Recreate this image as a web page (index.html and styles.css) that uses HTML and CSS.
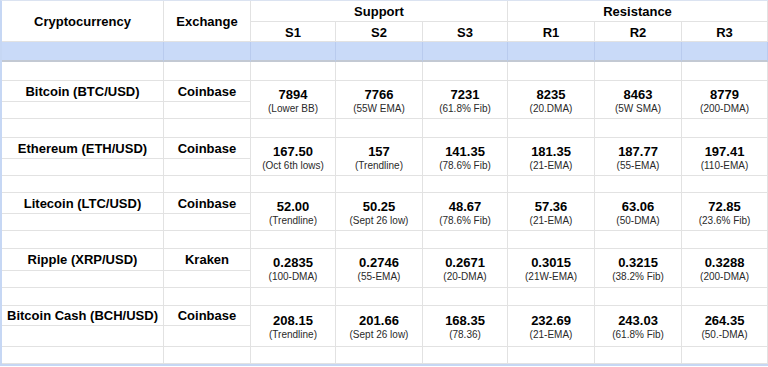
FILE: index.html
```html
<!DOCTYPE html>
<html>
<head>
<meta charset="utf-8">
<link rel="stylesheet" href="styles.css">
</head>
<body>
<div class="frame">
<table class="sheet">
<colgroup>
<col class="w-name"><col class="w-ex"><col class="w-a"><col class="w-b"><col class="w-a"><col class="w-b"><col class="w-b"><col class="w-c">
</colgroup>
<thead>
<tr class="h21"><th rowspan="2">Cryptocurrency</th><th rowspan="2">Exchange</th><th colspan="3">Support</th><th colspan="3">Resistance</th></tr>
<tr class="h20"><th>S1</th><th>S2</th><th>S3</th><th>R1</th><th>R2</th><th>R3</th></tr>
<tr class="band"><td></td><td></td><td></td><td></td><td></td><td></td><td></td><td></td></tr>
</thead>
<tbody>
<tr class="h19"><td></td><td></td><td></td><td></td><td></td><td></td><td></td><td></td></tr>
<tr class="h21"><td class="coin">Bitcoin (BTC/USD)</td><td class="coin">Coinbase</td>
<td class="lvl" rowspan="2"><b>7894</b><span>(Lower BB)</span></td>
<td class="lvl" rowspan="2"><b>7766</b><span>(55W EMA)</span></td>
<td class="lvl" rowspan="2"><b>7231</b><span>(61.8% Fib)</span></td>
<td class="lvl" rowspan="2"><b>8235</b><span>(20.DMA)</span></td>
<td class="lvl" rowspan="2"><b>8463</b><span>(5W SMA)</span></td>
<td class="lvl" rowspan="2"><b>8779</b><span>(200-DMA)</span></td></tr>
<tr class="h17"><td></td><td></td></tr>

<tr class="h19"><td></td><td></td><td></td><td></td><td></td><td></td><td></td><td></td></tr>
<tr class="h21"><td class="coin">Ethereum (ETH/USD)</td><td class="coin">Coinbase</td>
<td class="lvl" rowspan="2"><b>167.50</b><span>(Oct 6th lows)</span></td>
<td class="lvl" rowspan="2"><b>157</b><span>(Trendline)</span></td>
<td class="lvl" rowspan="2"><b>141.35</b><span>(78.6% Fib)</span></td>
<td class="lvl" rowspan="2"><b>181.35</b><span>(21-EMA)</span></td>
<td class="lvl" rowspan="2"><b>187.77</b><span>(55-EMA)</span></td>
<td class="lvl" rowspan="2"><b>197.41</b><span>(110-EMA)</span></td></tr>
<tr class="h17"><td></td><td></td></tr>

<tr class="h17"><td></td><td></td><td></td><td></td><td></td><td></td><td></td><td></td></tr>
<tr class="h21"><td class="coin">Litecoin (LTC/USD)</td><td class="coin">Coinbase</td>
<td class="lvl" rowspan="2"><b>52.00</b><span>(Trendline)</span></td>
<td class="lvl" rowspan="2"><b>50.25</b><span>(Sept 26 low)</span></td>
<td class="lvl" rowspan="2"><b>48.67</b><span>(78.6% Fib)</span></td>
<td class="lvl" rowspan="2"><b>57.36</b><span>(21-EMA)</span></td>
<td class="lvl" rowspan="2"><b>63.06</b><span>(50-DMA)</span></td>
<td class="lvl" rowspan="2"><b>72.85</b><span>(23.6% Fib)</span></td></tr>
<tr class="h17"><td></td><td></td></tr>

<tr class="h18"><td></td><td></td><td></td><td></td><td></td><td></td><td></td><td></td></tr>
<tr class="h22"><td class="coin">Ripple (XRP/USD)</td><td class="coin">Kraken</td>
<td class="lvl" rowspan="2"><b>0.2835</b><span>(100-DMA)</span></td>
<td class="lvl" rowspan="2"><b>0.2746</b><span>(55-EMA)</span></td>
<td class="lvl" rowspan="2"><b>0.2671</b><span>(20-DMA)</span></td>
<td class="lvl" rowspan="2"><b>0.3015</b><span>(21W-EMA)</span></td>
<td class="lvl" rowspan="2"><b>0.3215</b><span>(38.2% Fib)</span></td>
<td class="lvl" rowspan="2"><b>0.3288</b><span>(200-DMA)</span></td></tr>
<tr class="h17"><td></td><td></td></tr>

<tr class="h18"><td></td><td></td><td></td><td></td><td></td><td></td><td></td><td></td></tr>
<tr class="h20"><td class="coin">Bitcoin Cash (BCH/USD)</td><td class="coin">Coinbase</td>
<td class="lvl" rowspan="2"><b>208.15</b><span>(Trendline)</span></td>
<td class="lvl" rowspan="2"><b>201.66</b><span>(Sept 26 low)</span></td>
<td class="lvl" rowspan="2"><b>168.35</b><span>(78.36)</span></td>
<td class="lvl" rowspan="2"><b>232.69</b><span>(21-EMA)</span></td>
<td class="lvl" rowspan="2"><b>243.03</b><span>(61.8% Fib)</span></td>
<td class="lvl" rowspan="2"><b>264.35</b><span>(50.-DMA)</span></td></tr>
<tr class="h21"><td></td><td></td></tr>
<tr class="h17"><td></td><td></td><td></td><td></td><td></td><td></td><td></td><td></td></tr>
</tbody>
</table>
</div>
</body>
</html>
```
FILE: styles.css
```css
html, body {
  margin: 0;
  padding: 0;
  background: #ffffff;
}

.frame {
  width: 768px;
  box-sizing: border-box;
  border-top: 1px solid #dbe3f1;
  border-left: 2px solid #c6d7f4;
  border-bottom: 2px solid #c6d7f4;
}

.sheet {
  width: 766px;
  table-layout: fixed;
  border-collapse: separate;
  border-spacing: 0;
  font-family: "Liberation Sans", Arial, sans-serif;
  color: #000;
}

.w-name { width: 162px; }
.w-ex { width: 87px; }
.w-a { width: 85px; }
.w-b { width: 87px; }
.w-c { width: 86px; }

.sheet th,
.sheet td {
  padding: 0;
  border-right: 1px solid #e2e2e2;
  border-bottom: 1px solid #e2e2e2;
  text-align: center;
  vertical-align: middle;
  box-sizing: border-box;
  white-space: nowrap;
  overflow: hidden;
}

.sheet th {
  padding-top: 1px;
  font-size: 13px;
  font-weight: bold;
  line-height: 15px;
}

.h17 { height: 17px; }
.h18 { height: 18px; }
.h19 { height: 19px; }
.h20 { height: 20px; }
.h21 { height: 21px; }
.h22 { height: 22px; }

.band { height: 20px; }
.band td {
  background: #c9daf8;
  border-right-color: #b9cbee;
  border-bottom: 2px solid #c3c9d3;
}

.coin {
  font-size: 13px;
  font-weight: bold;
  line-height: 15px;
}

.sheet .lvl {
  padding-top: 2px;
}

.lvl b {
  display: block;
  font-size: 13px;
  font-weight: bold;
  line-height: 15px;
}

.lvl span {
  display: block;
  font-size: 10px;
  line-height: 13px;
  color: #2a2a2a;
}
```
